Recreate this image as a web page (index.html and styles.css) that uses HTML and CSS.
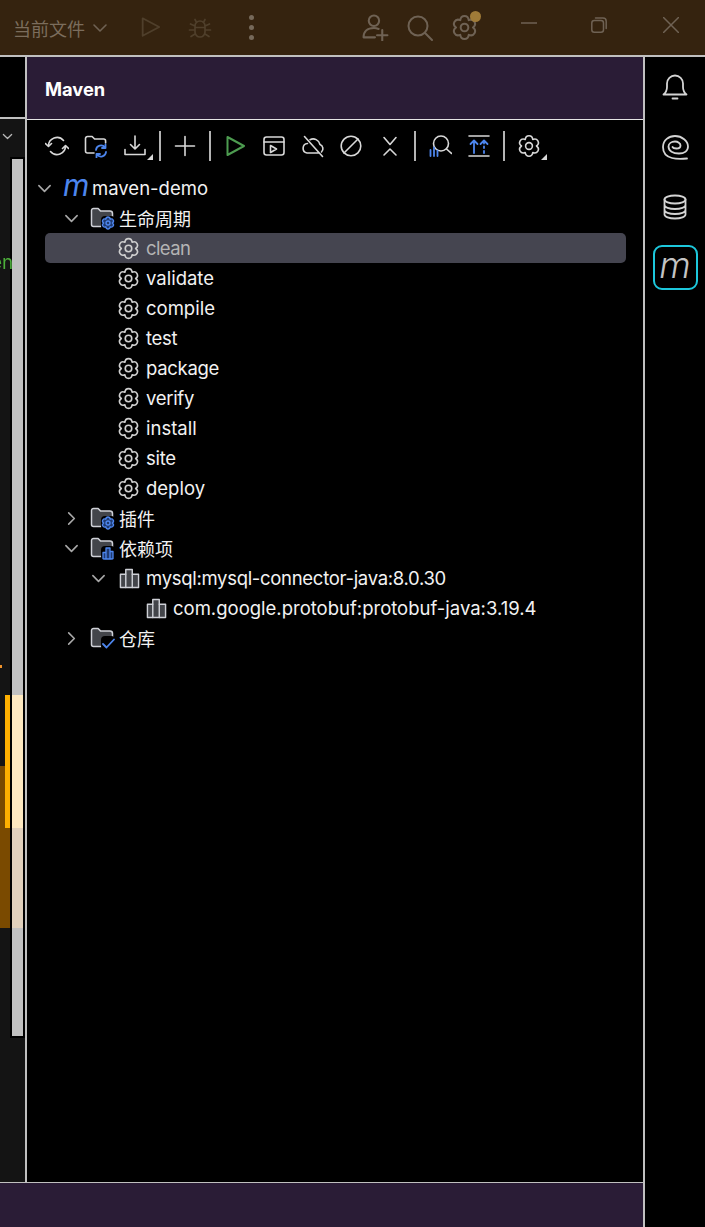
FILE: index.html
```html
<!DOCTYPE html>
<html lang="zh">
<head>
<meta charset="utf-8">
<title>Maven</title>
<link rel="stylesheet" href="styles.css">
</head>
<body>
<svg class="defs" width="0" height="0">
  <symbol id="gear" viewBox="0 0 24 24"><path d="M8.25 5.5C8.8.5 15.2.5 15.75 5.5C20.36 3.48 23.56 9.02 19.5 12C23.56 14.98 20.36 20.52 15.75 18.5C15.2 23.5 8.8 23.5 8.25 18.5C3.64 20.52.44 14.98 4.5 12C.44 9.02 3.64 3.48 8.25 5.5Z"/><circle cx="12" cy="12" r="3.4"/></symbol>
  <symbol id="down" viewBox="0 0 16 16"><path d="M2 5l6 6 6-6"/></symbol>
  <symbol id="right" viewBox="0 0 16 16"><path d="M5 2l6 6-6 6"/></symbol>
  <symbol id="folder" viewBox="0 0 24 24"><path class="fill" d="M1.5 4.5a2 2 0 0 1 2-2h4.6l2.6 2.6h9.3a2.5 2.5 0 0 1 2.5 2.5v10.6a2.3 2.3 0 0 1-2.3 2.3H3.5a2 2 0 0 1-2-2z"/></symbol>
  <symbol id="bars" viewBox="0 0 22 22"><path class="fill" d="M1.5 20.5V6.5h5.6V1.5h6.8V6.500h6.600V20.500z"/><path class="fill" d="M7.100 6.500V20.500M13.900 6.500V20.500"/></symbol>
</svg>

<header class="titlebar">
  <span class="run-config">当前文件</span>
  <svg class="ico dim chev-run"><use href="#down"/></svg>
  <svg class="ico dim off t-play" viewBox="0 0 24 24"><path d="M4 2.500L22 12 4 21.500z"/></svg>
  <svg class="ico dim off t-bug" viewBox="0 0 24 24"><path d="M7 10a5 5 0 0 1 10 0v6a5 5 0 0 1-10 0zM8.500 6.500L7 3.500M15.500 6.500L17 3.500M7 10L2.500 8M17 10l4.500-2M7 14H1.500M17 14h5.500M7 18l-4 2.500M17 18l4 2.500M7 11.500h10"/></svg>
  <span class="t-dots"><i></i><i></i><i></i></span>
  <svg class="ico dim t-user" viewBox="0 0 26 26"><circle cx="11.500" cy="6.500" r="5"/><path d="M1.500 22.500c0-5.500 3.500-9 10-9 1.800 0 3 .3 4.500.9M1.500 22.500h11M19.500 15.500v10M14.500 20.500h10"/></svg>
  <svg class="ico dim t-search" viewBox="0 0 26 26"><circle cx="11" cy="11" r="9.500"/><path d="M17.800 17.800L25 25"/></svg>
  <span class="t-gear"><svg class="ico dim"><use href="#gear"/></svg><b class="dot"></b></span>
  <svg class="ico dim t-min" viewBox="0 0 16 16"><path d="M0 8h16"/></svg>
  <svg class="ico dim t-restore" viewBox="0 0 16 16"><rect x=".8" y="3.500" width="11.700" height="11.700" rx="2.500"/><path d="M4.500 1h7.500a3.200 3.200 0 0 1 3.200 3.200v7.300"/></svg>
  <svg class="ico dim t-close" viewBox="0 0 16 16"><path d="M.5.500l15 15M15.500.500l-15 15"/></svg>
</header>

<div class="workspace">
  <div class="main">
    <div class="content">
      <aside class="strip">
        <div class="strip-top"></div>
        <div class="strip-body">
          <svg class="ico strip-chev"><use href="#down"/></svg>
          <span class="peek">en</span>
          <div class="overview">
            <span class="tick"></span>
            <span class="band-brown"></span>
            <span class="band-yellow"></span>
            <span class="thumb-light"></span>
            <span class="thumb-tan"></span>
          </div>
        </div>
      </aside>
      <section class="panel">
        <h1 class="panel-title">Maven</h1>
        <div class="toolbar">
          <svg class="tool" viewBox="0 0 24 24"><path d="M3.500 12a8.500 8.500 0 0 1 15-5.500M20.500 12a8.500 8.500 0 0 1-15 5.500M.5 9.500l3 3 3-3M17.500 14.500l3-3 3 3"/></svg>
          <svg class="tool" viewBox="0 0 24 24"><path d="M10 19H3.500a2 2 0 0 1-2-2V4.500a2 2 0 0 1 2-2h4.600l2.500 2.500h9a2 2 0 0 1 2 2v2"/><path class="blue" d="M12 16a5 5 0 0 1 9-2.500M22 18a5 5 0 0 1-9 2.500M21.500 10.500v3.500h-3.500M12.500 23.500v-3.500h3.500"/></svg>
          <span class="more"><svg class="tool" viewBox="0 0 24 24"><path d="M12 2v12.500M7.500 10.500l4.500 4.500 4.500-4.500M2 15.500V20.500h20v-5"/></svg></span>
          <i class="sep"></i>
          <svg class="tool" viewBox="0 0 24 24"><path d="M12 2.500v19M2.500 12h19"/></svg>
          <i class="sep"></i>
          <svg class="tool green" viewBox="0 0 24 24"><path d="M4.500 3L21 12 4.500 21z"/></svg>
          <svg class="tool" viewBox="0 0 24 24"><rect x="2" y="3" width="20" height="18" rx="2.500"/><path d="M2 8h20M8.500 11.500l6 3.500-6 3.500z"/></svg>
          <svg class="tool" viewBox="0 0 24 24"><path d="M6.500 9.500a4.800 4.800 0 0 0-.5 9.500h11.500M20.500 18a4.500 4.500 0 0 0-1.500-7.500 7 7 0 0 0-10-4.800M3.500 2.500l18 20"/></svg>
          <svg class="tool" viewBox="0 0 24 24"><circle cx="12" cy="12" r="9.800"/><path d="M5 19L19 5"/></svg>
          <svg class="tool" viewBox="0 0 24 24"><path d="M6 3.500l6 7 6-7M6 21l6-6 6 6"/></svg>
          <i class="sep"></i>
          <svg class="tool" viewBox="0 0 24 24"><circle cx="13" cy="9.500" r="7.500"/><path d="M18.500 15l5 4.500"/><path class="blue" d="M2.500 16v6M6 13.500v8.500M9.500 16.500v5.500"/></svg>
          <svg class="tool" viewBox="0 0 24 24"><path d="M2 2h20M2 22h20"/><path class="blue" d="M7 19V7M3.500 10L7 6.500l3.500 3.500M17 9.500V7M17 12.500v1.500M17 17v2M13.500 10L17 6.500l3.500 3.500"/></svg>
          <i class="sep"></i>
          <span class="more"><svg class="tool"><use href="#gear"/></svg></span>
        </div>
        <ul class="tree">
          <li class="row d0"><svg class="chev"><use href="#down"/></svg><span class="mlogo">m</span><span class="label">maven-demo</span></li>
          <li class="row d1"><svg class="chev"><use href="#down"/></svg><span class="fold"><svg class="folder"><use href="#folder"/></svg><svg class="badge"><use href="#gear"/></svg></span><span class="label cjk">生命周期</span></li>
          <li class="row d2 selected"><span class="nochev"></span><svg class="gear"><use href="#gear"/></svg><span class="label tight-2">clean</span></li>
          <li class="row d2"><span class="nochev"></span><svg class="gear"><use href="#gear"/></svg><span class="label">validate</span></li>
          <li class="row d2"><span class="nochev"></span><svg class="gear"><use href="#gear"/></svg><span class="label">compile</span></li>
          <li class="row d2"><span class="nochev"></span><svg class="gear"><use href="#gear"/></svg><span class="label tight-1">test</span></li>
          <li class="row d2"><span class="nochev"></span><svg class="gear"><use href="#gear"/></svg><span class="label tight-1">package</span></li>
          <li class="row d2"><span class="nochev"></span><svg class="gear"><use href="#gear"/></svg><span class="label tight-1">verify</span></li>
          <li class="row d2"><span class="nochev"></span><svg class="gear"><use href="#gear"/></svg><span class="label">install</span></li>
          <li class="row d2"><span class="nochev"></span><svg class="gear"><use href="#gear"/></svg><span class="label tight-1">site</span></li>
          <li class="row d2"><span class="nochev"></span><svg class="gear"><use href="#gear"/></svg><span class="label">deploy</span></li>
          <li class="row d1"><svg class="chev"><use href="#right"/></svg><span class="fold"><svg class="folder"><use href="#folder"/></svg><svg class="badge"><use href="#gear"/></svg></span><span class="label cjk">插件</span></li>
          <li class="row d1"><svg class="chev"><use href="#down"/></svg><span class="fold"><svg class="folder"><use href="#folder"/></svg><svg class="badge" viewBox="0 0 14 14"><path class="blue-fill" d="M2 13V6.500h3V2h4V5.500h3V13zM5 6.500V13M9 5.500V13"/></svg></span><span class="label cjk">依赖项</span></li>
          <li class="row d2"><svg class="chev"><use href="#down"/></svg><svg class="bars"><use href="#bars"/></svg><span class="label tight-1">mysql:mysql-connector-java:8.0.30</span></li>
          <li class="row d3"><span class="nochev"></span><svg class="bars"><use href="#bars"/></svg><span class="label">com.google.protobuf:protobuf-java:3.19.4</span></li>
          <li class="row d1"><svg class="chev"><use href="#right"/></svg><span class="fold"><svg class="folder"><use href="#folder"/></svg><svg class="badge check" viewBox="0 0 14 14"><path class="blue" d="M2 8l3.500 3.500L13 3.500"/></svg></span><span class="label cjk">仓库</span></li>
        </ul>
      </section>
    </div>
    <footer class="statusbar"></footer>
  </div>
  <nav class="sidebar">
    <svg class="side" viewBox="0 0 28 28"><path d="M2.500 21.500c2.500-2 3.500-4 3.500-7.500V10.500a8 8 0 0 1 16 0V14c0 3.500 1 5.500 3.500 7.500z"/><path d="M11.500 25.500h5"/></svg>
    <svg class="side" viewBox="0 0 28 28"><path d="M26 25.500C20 26 15 26 11 25C5 23.500 2 19 2 14C2 7 8 3 14 3C21 3 27 8 27 13.500C27 18 23 20.500 18 20.500C12 20.500 7.500 18 7.500 13.500C7.500 10.500 10.500 8.500 14 8.500C17 8.500 19.500 10.500 19.500 12.500C19.500 14.500 17.500 15.500 15.500 15.500C13.500 15.500 12 15 11.500 14"/></svg>
    <svg class="side" viewBox="0 0 28 28"><ellipse cx="14" cy="6.500" rx="10.500" ry="4"/><path d="M3.500 6.500v15c0 2.200 4.700 4 10.500 4s10.500-1.800 10.500-4v-15M3.500 12c0 2.200 4.700 4 10.500 4s10.500-1.800 10.500-4M3.500 17c0 2.200 4.700 4 10.500 4s10.500-1.800 10.500-4"/></svg>
    <span class="side-m">m</span>
  </nav>
</div>
</body>
</html>
```
FILE: styles.css
```css
* { box-sizing: border-box; }
html, body { margin: 0; padding: 0; height: 100%; }
body {
  width: 705px;
  height: 1227px;
  overflow: hidden;
  background: #000;
  color: #f2f2f2;
  font-family: Inter, "Noto Sans CJK SC", sans-serif;
  display: flex;
  flex-direction: column;
}
.defs { position: absolute; }
svg { fill: none; stroke-linecap: round; stroke-linejoin: round; display: block; flex: none; }

.titlebar {
  height: 57px;
  flex: none;
  background: #35230f;
  border-bottom: 2px solid #c0c0c0;
  display: flex;
  align-items: center;
}
.run-config { margin-left: 13px; font-size: 18px; color: #7b6d5d; font-family: "Noto Sans CJK SC", sans-serif; }
.ico { width: 16px; height: 16px; }
.dim { stroke: #6f6254; stroke-width: 2; }
.dim.off { stroke: #4f3f2b; }
.chev-run { margin-left: 7px; stroke-width: 1.6; }
.t-play { width: 22px; height: 24px; margin: -2px 0 0 31px; }
.t-bug { width: 24px; height: 24px; margin-left: 27px; stroke-width: 1.7; }
.t-dots { display: flex; flex-direction: column; gap: 5px; margin-left: 37px; }
.t-dots i { width: 5px; height: 5px; border-radius: 50%; background: #76695a; }
.t-user { width: 27px; height: 27px; margin-left: 108px; }
.t-search { width: 26px; height: 26px; margin-left: 18px; }
.t-gear { position: relative; margin-left: 18px; }
.t-gear .ico { width: 27px; height: 27px; stroke-width: 1.8; }
.dot { position: absolute; right: -3px; top: -3px; width: 11px; height: 11px; border-radius: 50%; background: #a07b38; }
.t-min { margin: -10px 0 0 43px; stroke-width: 1.5; }
.t-restore { margin: -6px 0 0 54px; stroke-width: 1.5; }
.t-close { margin: -6px 0 0 56px; stroke-width: 1.5; }

.workspace { flex: 1; display: flex; min-height: 0; }
.main { flex: 1; display: flex; flex-direction: column; min-width: 0; }
.content { flex: 1; display: flex; min-height: 0; }

.strip { width: 27px; flex: none; border-right: 2px solid #c0c0c0; display: flex; flex-direction: column; }
.strip-top { height: 62px; flex: none; background: #000; border-bottom: 2px solid #c0c0c0; }
.strip-body { flex: 1; background: #141414; position: relative; padding-top: 38px; overflow: hidden; }
.strip-chev { position: absolute; left: 2px; top: 12px; width: 11px; height: 11px; stroke: #b9b9b9; stroke-width: 1.8; }
.peek {
  position: absolute; z-index: 1; left: -9px; top: 132px; width: 30px; font-size: 19px; line-height: 24px;
  background: linear-gradient(90deg, #4caf3a 21px, #dbecd4 21px);
  -webkit-background-clip: text; background-clip: text; color: transparent;
}
.overview { position: relative; margin-left: 10px; width: 15px; height: 881px; background: #000; padding: 2px; }
.overview::before { content: ""; display: block; height: 100%; width: 11px; background: #c0c0c0; }
.tick { position: absolute; left: -10px; top: 508px; width: 2px; height: 3px; background: #f0932b; }
.band-brown { position: absolute; left: -10px; top: 609px; width: 10px; height: 162px; background: #7a4a00; }
.band-yellow { position: absolute; left: -5px; top: 538px; width: 5px; height: 133px; background: #ffb000; }
.thumb-light { position: absolute; left: 2px; top: 538px; width: 11px; height: 133px; background: #fde8c0; }
.thumb-tan { position: absolute; left: 2px; top: 671px; width: 11px; height: 100px; background: #e0d0bc; }

.panel { flex: 1; min-width: 0; background: #000; display: flex; flex-direction: column; }
.panel-title {
  margin: 0; height: 63px; flex: none; background: #2a1c36; border-bottom: 1px solid #e4e4e4;
  padding: 2px 0 0 18px; display: flex; align-items: center; font-size: 18.3px; font-weight: 700; color: #fff;
}
.toolbar { display: flex; align-items: center; gap: 14.95px; padding: 0 0 2px 18px; height: 53px; flex: none; }
.tool { width: 24px; height: 24px; stroke: #d8d8d8; stroke-width: 1.6; }
.tool.green { stroke: #4d9c50; stroke-width: 2; }
.tool .blue, .blue { stroke: #4d86ee; stroke-width: 1.8; }
.sep { width: 2px; height: 30px; background: #b4b4b4; margin: 0 -3px; flex: none; }
.more { position: relative; display: block; }
.more::after {
  content: ""; position: absolute; right: -6px; bottom: -2px; width: 0; height: 0;
  border-left: 6px solid transparent; border-bottom: 6px solid #d8d8d8;
}

.tree { list-style: none; margin: 0; padding: 0; }
.row { position: relative; height: 30px; display: flex; align-items: center; font-size: 18.5px; }
.row > * { position: relative; }
.d0 { padding-left: 4px; }
.d1 { padding-left: 31px; }
.d2 { padding-left: 58px; }
.d3 { padding-left: 85px; }
.selected::before {
  content: ""; position: absolute; left: 18px; right: 17px; top: 0; bottom: 0;
  background: #454550; border-radius: 5px;
}
.selected .label { color: #b4b4b4; }
.chev { width: 15px; height: 15px; margin: 0 6px; stroke: #a8a8a8; stroke-width: 1.7; }
.nochev { width: 27px; flex: none; }
.mlogo { width: 34px; padding-left: 5px; font-size: 30px; font-style: italic; line-height: 30px; color: #4d86ee; margin-top: -7px; font-weight: 400; }
.label { white-space: nowrap; }
.tight-1 { letter-spacing: -.3px; }
.tight-2 { letter-spacing: -.6px; }
.cjk { font-family: "Noto Sans CJK SC", sans-serif; font-size: 18px; }
.fold { position: relative; width: 34px; height: 26px; flex: none; }
.folder { position: absolute; left: 5px; top: 1px; width: 24px; height: 24px; }
.fill { fill: #43454a; stroke: #ced0d6; stroke-width: 1.5; }
.badge { position: absolute; left: 16px; top: 11px; width: 14px; height: 14px; stroke: #4d86ee; stroke-width: 2.4; fill: #1f3a70; background: #000; border-radius: 4px; }
.badge.check { fill: none; }
.blue-fill { fill: #1f3a70; stroke: #4d86ee; stroke-width: 1.3; }
.gear { width: 23px; height: 23px; margin-right: 6px; margin-left: 5px; stroke: #cfcfcf; stroke-width: 1.7; }
.bars { width: 21px; height: 21px; margin: 0 6px 0 7px; }

.statusbar { height: 45px; flex: none; background: #2a1c36; border-top: 1px solid #c0c0c0; }

.sidebar {
  width: 62px; flex: none; border-left: 2px solid #c0c0c0; background: #000;
  display: flex; flex-direction: column; align-items: center; padding-top: 16px;
}
.side { width: 28px; height: 28px; stroke: #d4d4d4; stroke-width: 1.8; margin-bottom: 32px; }
.side-m {
  margin-top: -8px; width: 45px; height: 45px; border: 2px solid #1dc8dc; border-radius: 9px;
  font-size: 36px; font-style: italic; font-weight: 300; color: #c4c4c4;
  display: flex; align-items: center; justify-content: center; line-height: 1; padding-bottom: 6px;
}
```
